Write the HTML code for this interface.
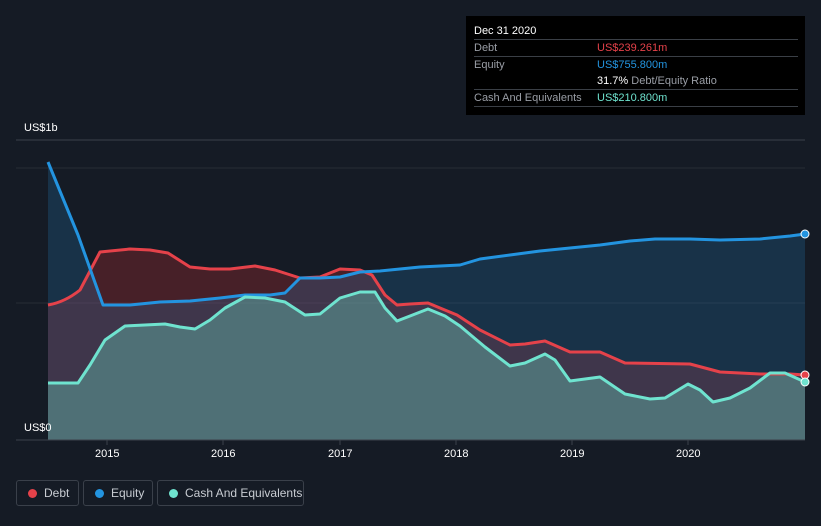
<!DOCTYPE html><html><head><style>
body{margin:0;width:821px;height:526px;background:#151b25;font-family:"Liberation Sans",sans-serif;overflow:hidden;position:relative}
.t{position:absolute;font-size:11px;color:#fff}
.tip{position:absolute;left:466px;top:16px;width:339px;height:99px;background:#000}
.tip .r{position:absolute;left:8px;width:324px;height:16px;font-size:11px;color:#9a9ea6;line-height:16px}
.tip .v{position:absolute;left:123px}
.lg{position:absolute;top:480px;height:26px;border:1px solid #3a404a;border-radius:3px;box-sizing:border-box;color:#c8ccd2;font-size:12px;line-height:24px;padding-left:27px}
.lg i{position:absolute;left:11px;top:8px;width:9px;height:9px;border-radius:50%}
</style></head><body>
<svg width="821" height="526" style="position:absolute;left:0;top:0">
<line x1="16" y1="140" x2="805" y2="140" stroke="#3c414a"/>
<line x1="16" y1="168" x2="805" y2="168" stroke="#272c35"/>
<line x1="16" y1="303" x2="805" y2="303" stroke="#272c35"/>
<path d="M48,305 C60,303 70,298 80,290 L100,252 L130,249 L150,250 L168,253 L190,267 L210,269 L230,269 L255,266 L275,270 L300,278 L320,277 L340,269 L360,270 L372,275 L385,295 L397,305 L410,304 L428,303 L440,308 L457,315 L480,330 L510,345 L525,344 L545,341 L570,352 L600,352 L625,363 L690,364 L720,372 L760,374 L790,374 L805,375 L805,440 L48,440Z" fill="rgba(190,45,50,0.3)"/>
<path d="M48,162 L78,235 L103,305 L130,305 L160,302 L190,301 L220,298 L245,295 L270,295 L285,293 L300,278 L320,278 L340,277 L360,272 L380,271 L400,269 L420,267 L440,266 L460,265 L480,259 L510,255 L540,251 L570,248 L600,245 L630,241 L655,239 L690,239 L720,240 L760,239 L790,236 L805,234 L805,440 L48,440Z" fill="rgba(35,130,200,0.22)"/>
<path d="M48,383 L78,383 L90,365 L105,340 L125,326 L165,324 L180,327 L195,329 L210,320 L225,308 L245,297 L265,298 L285,302 L305,315 L320,314 L340,298 L360,292 L375,292 L385,308 L397,321 L410,316 L428,309 L445,316 L460,326 L485,347 L510,366 L525,363 L545,354 L555,360 L570,381 L600,377 L625,394 L650,399 L665,398 L688,384 L700,390 L713,402 L730,398 L750,388 L770,373 L785,373 L805,382 L805,440 L48,440Z" fill="rgba(110,220,200,0.35)"/>
<g fill="none" stroke-width="3" stroke-linejoin="round">
<path d="M48,305 C60,303 70,298 80,290 L100,252 L130,249 L150,250 L168,253 L190,267 L210,269 L230,269 L255,266 L275,270 L300,278 L320,277 L340,269 L360,270 L372,275 L385,295 L397,305 L410,304 L428,303 L440,308 L457,315 L480,330 L510,345 L525,344 L545,341 L570,352 L600,352 L625,363 L690,364 L720,372 L760,374 L790,374 L805,375" stroke="#e5424a"/>
<path d="M48,162 L78,235 L103,305 L130,305 L160,302 L190,301 L220,298 L245,295 L270,295 L285,293 L300,278 L320,278 L340,277 L360,272 L380,271 L400,269 L420,267 L440,266 L460,265 L480,259 L510,255 L540,251 L570,248 L600,245 L630,241 L655,239 L690,239 L720,240 L760,239 L790,236 L805,234" stroke="#2394e0"/>
<path d="M48,383 L78,383 L90,365 L105,340 L125,326 L165,324 L180,327 L195,329 L210,320 L225,308 L245,297 L265,298 L285,302 L305,315 L320,314 L340,298 L360,292 L375,292 L385,308 L397,321 L410,316 L428,309 L445,316 L460,326 L485,347 L510,366 L525,363 L545,354 L555,360 L570,381 L600,377 L625,394 L650,399 L665,398 L688,384 L700,390 L713,402 L730,398 L750,388 L770,373 L785,373 L805,382" stroke="#6fe3cf"/>
</g>
<circle cx="805" cy="234" r="4" fill="#2394e0" stroke="#fff" stroke-width="1"/>
<circle cx="805" cy="375" r="4" fill="#e5424a" stroke="#fff" stroke-width="1"/>
<circle cx="805" cy="382" r="4" fill="#6fe3cf" stroke="#fff" stroke-width="1"/>
<line x1="16" y1="440" x2="805" y2="440" stroke="#3c414a"/>
<g stroke="#3c414a"><line x1="107" y1="440" x2="107" y2="445"/><line x1="223" y1="440" x2="223" y2="445"/><line x1="340" y1="440" x2="340" y2="445"/><line x1="456" y1="440" x2="456" y2="445"/><line x1="572" y1="440" x2="572" y2="445"/><line x1="688" y1="440" x2="688" y2="445"/></g>
</svg>
<div class="t" style="left:24px;top:122px">US$1b</div>
<div class="t" style="left:24px;top:422px">US$0</div>
<div class="t" style="left:95px;top:448px">2015</div>
<div class="t" style="left:211px;top:448px">2016</div>
<div class="t" style="left:328px;top:448px">2017</div>
<div class="t" style="left:444px;top:448px">2018</div>
<div class="t" style="left:560px;top:448px">2019</div>
<div class="t" style="left:676px;top:448px">2020</div>
<div class="tip">
<div class="r" style="top:7px;color:#fff;border-bottom:1px solid #3a3f46">Dec 31 2020</div>
<div class="r" style="top:24px;border-bottom:1px solid #3a3f46">Debt<span class="v" style="color:#e5424a">US$239.261m</span></div>
<div class="r" style="top:41px">Equity<span class="v" style="color:#2394e0">US$755.800m</span></div>
<div class="r" style="top:57px;border-bottom:1px solid #3a3f46"><span class="v"><b style="color:#fff;font-weight:normal">31.7%</b> Debt/Equity Ratio</span></div>
<div class="r" style="top:74px;border-bottom:1px solid #3a3f46">Cash And Equivalents<span class="v" style="color:#6fe3cf">US$210.800m</span></div>
</div>
<div class="lg" style="left:16px;width:63px"><i style="background:#e5424a"></i>Debt</div>
<div class="lg" style="left:83px;width:70px"><i style="background:#2394e0"></i>Equity</div>
<div class="lg" style="left:157px;width:147px"><i style="background:#6fe3cf"></i>Cash And Equivalents</div>
</body></html>
